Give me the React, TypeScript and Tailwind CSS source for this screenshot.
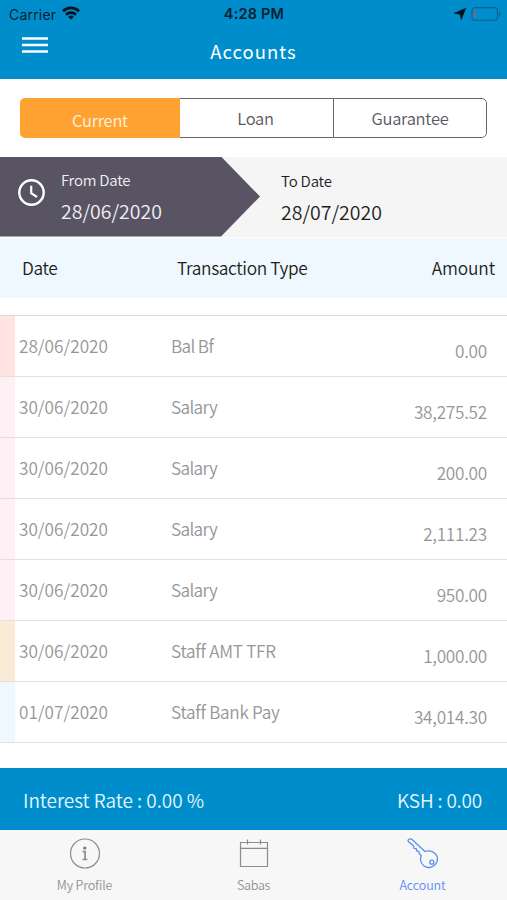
import clsx from "clsx";

const transactions = [
  { date: "28/06/2020", type: "Bal Bf", amount: "0.00", color: "bg-[#ffe4e1]" },
  { date: "30/06/2020", type: "Salary", amount: "38,275.52", color: "bg-[#fff0f5]" },
  { date: "30/06/2020", type: "Salary", amount: "200.00", color: "bg-[#fff0f5]" },
  { date: "30/06/2020", type: "Salary", amount: "2,111.23", color: "bg-[#fff0f5]" },
  { date: "30/06/2020", type: "Salary", amount: "950.00", color: "bg-[#fff0f5]" },
  { date: "30/06/2020", type: "Staff AMT TFR", amount: "1,000.00", color: "bg-[#faebd7]" },
  { date: "01/07/2020", type: "Staff Bank Pay", amount: "34,014.30", color: "bg-[#f0f8ff]" },
];

function StatusBar() {
  return (
    <div className="grid h-7 grid-cols-3 items-center pr-1.5 pl-[9px] font-[Inter,sans-serif] text-[14px] font-normal text-[#04202e]">
      <div className="flex items-center gap-[6px]">
        <span className="tracking-[0.2px]">Carrier</span>
        <svg className="-mt-0.5" width="18" height="14" viewBox="0 0 18 14" fill="none" stroke="#04131c" strokeWidth="2.8">
          <path d="M1 5.2a11.5 11.5 0 0 1 16 0" />
          <path d="M4 8.7a7.2 7.2 0 0 1 10 0" />
          <path d="M9 13.6 6.2 10.9a4 4 0 0 1 5.6 0Z" fill="#04131c" stroke="none" />
        </svg>
      </div>
      <span className="-ml-0.5 text-center text-[14.5px] font-semibold tracking-[0.2px] whitespace-nowrap">4:28 PM</span>
      <div className="flex items-center justify-end gap-[5px]">
        <svg width="12" height="12" viewBox="0 0 12 12" fill="#04131c" stroke="#04131c" strokeWidth=".8" strokeLinejoin="round">
          <path d="M11.5.5 7.2 11.4 6.2 6.2.5 5.2Z" />
        </svg>
        <svg width="30" height="14" viewBox="0 0 30 14" fill="none">
          <rect x="1" y=".7" width="25.5" height="12.6" rx="3" stroke="#0d6596" strokeWidth="1.2" />
          <path d="M28 4.5v5a2.7 2.7 0 0 0 0-5Z" fill="#0d6596" />
          <rect x="2.6" y="2.4" width="2" height="9.2" rx="1" fill="#7d6a80" />
        </svg>
      </div>
    </div>
  );
}

function Header() {
  return (
    <header className="h-[79px] bg-[#008dcb]">
      <StatusBar />
      <div className="grid grid-cols-[1fr_auto_1fr]">
        <button aria-label="Menu" className="mt-[9px] ml-[22px] h-4 w-[26px]">
          <svg width="26" height="16" viewBox="0 0 26 16" stroke="#fff" strokeWidth="2.3">
            <path d="M0 1.5h26M0 8h26M0 14.5h26" />
          </svg>
        </button>
        <h1 className="mt-[13px] text-[18.5px] leading-5 font-normal tracking-[1px] text-white">Accounts</h1>
      </div>
    </header>
  );
}

function Segments() {
  return (
    <div className="mx-5 mt-[19px] flex h-[39.5px] overflow-hidden rounded-[5px] text-[16.5px] tracking-[-0.25px] text-[#5a5763]">
      <div className="flex w-40 items-center justify-center bg-[#ffa231] pt-1.5 text-[#fff3e0]">Current</div>
      <div className="flex w-[153px] items-center justify-center border-y border-[#67646f] pt-0.5 pr-0.5">Loan</div>
      <div className="flex flex-1 items-center justify-center rounded-r-[5px] border border-[#67646f] pt-0.5">
        Guarantee
      </div>
    </div>
  );
}

function DateRange() {
  return (
    <div className="mt-[19px] flex h-[80px] bg-[#f5f5f5]">
      <div className="flex w-[260px] bg-[#595463] pl-[18px] text-[#f1eff6] [clip-path:polygon(0_0,221px_0,100%_50%,221px_100%,0_100%)]">
        <svg className="mt-[22px]" width="27" height="27" viewBox="0 0 27 27" fill="none" stroke="#fff">
          <circle cx="13.5" cy="13.5" r="12.2" strokeWidth="2.4" />
          <path d="M13.2 6.8v7.4l5.8 3.8" strokeWidth="2.2" />
        </svg>
        <div className="ml-4 pt-[13px]">
          <p className="text-[15px] leading-5 tracking-[-0.25px]">From Date</p>
          <p className="mt-[9px] text-[19.5px] leading-6">28/06/2020</p>
        </div>
      </div>
      <div className="ml-[21px] pt-[14px] text-[#1d1d1f]">
        <p className="text-[15px] leading-5 tracking-[-0.2px]">To Date</p>
        <p className="mt-[9px] text-[19.5px] leading-6">28/07/2020</p>
      </div>
    </div>
  );
}

function Transactions() {
  return (
    <section>
      <div className="mt-px flex h-[60px] items-center bg-[#f0f8ff] pr-3 pl-[22px] text-[17.3px] tracking-[-0.35px] text-[#1b1e22]">
        <span className="w-[155px]">Date</span>
        <span className="flex-1">Transaction Type</span>
        <span className="tracking-[-0.1px]">Amount</span>
      </div>
      <div className="mt-[17px] border-t border-[#d9dcdd]">
        {transactions.map((item, i) => (
          <div
            key={i}
            className="flex h-[61.1px] items-center border-b border-[#e0e1e3] pr-5 text-[17.2px] text-[#969696]"
          >
            <div className={clsx("h-full w-[15px]", item.color)} />
            <span className="ml-1 w-[152px]">{item.date}</span>
            <span
              className={clsx("flex-1", item.type.startsWith("Staff") ? "tracking-[-0.3px]" : "tracking-[-0.65px]")}
            >
              {item.type}
            </span>
            <span className="pt-[10px] tracking-[-0.25px]">{item.amount}</span>
          </div>
        ))}
      </div>
    </section>
  );
}

function TabBar() {
  return (
    <nav className="grid h-[70px] grid-cols-3 bg-[#f7f7f7] text-[12.5px] leading-4 text-[#929292]">
      <div className="flex flex-col items-center pt-2">
        <svg width="32" height="32" viewBox="0 0 32 32" fill="none" stroke="#8c8c8c">
          <circle cx="16" cy="15.5" r="14.5" strokeWidth="1.2" />
          <circle cx="15.8" cy="10" r="1.6" fill="#777" stroke="none" />
          <path d="M13.6 13.7h2.5v7.8M13.6 21.5h4.8" strokeWidth="1.7" />
        </svg>
        <span className="mt-[7px] tracking-[-0.15px]">My Profile</span>
      </div>
      <div className="flex flex-col items-center pt-2">
        <svg width="32" height="32" viewBox="0 0 32 32" fill="none" stroke="#8c8c8c" strokeWidth="1.2">
          <path d="M2.5 4.5h27v24h-27ZM2.5 10.3h27M9.5 1.5v5M22.5 1.5v5" />
        </svg>
        <span className="mt-[7px] tracking-[-0.3px]">Sabas</span>
      </div>
      <div className="flex flex-col items-center pt-2 text-[#5c8ef2]">
        <svg width="32" height="32" viewBox="0 0 32 32" fill="none" stroke="currentColor" strokeWidth="1.3" strokeLinejoin="round">
          <path d="M1.3 1.8c1-1.2 2.7-1.2 3.8-.2l12.8 11.9c5-1.6 10.3.2 12 4.6 1.8 4.9-1.3 10.1-6.2 11.2-5.2 1-9.8-2.7-10.2-7.5-.1-1.5.3-2.9.8-4.1l-2.1-2.2-.3-2.2-2.2-.3-.4-2.3-2.3-.3-.4-2.3-4.7-4c-.8-.7-1-1.5-.6-2.3Z" />
          <circle cx="24.8" cy="24.2" r="2" />
        </svg>
        <span className="mt-[7px] tracking-[-0.1px]">Account</span>
      </div>
    </nav>
  );
}

export default function App() {
  return (
    <div className="flex h-[900px] w-[507px] flex-col overflow-hidden bg-white font-['Noto_Sans_CJK_SC',sans-serif] font-[350]">
      <Header />
      <Segments />
      <DateRange />
      <Transactions />
      <div className="mt-auto flex h-[62px] items-center justify-between bg-[#008dcb] pt-0.5 pr-[25px] pl-[23px] text-[19px] text-[#e3f6ff]">
        <span className="tracking-[-0.05px]">Interest Rate : 0.00 %</span>
        <span className="tracking-[-0.2px]">KSH : 0.00</span>
      </div>
      <TabBar />
    </div>
  );
}
